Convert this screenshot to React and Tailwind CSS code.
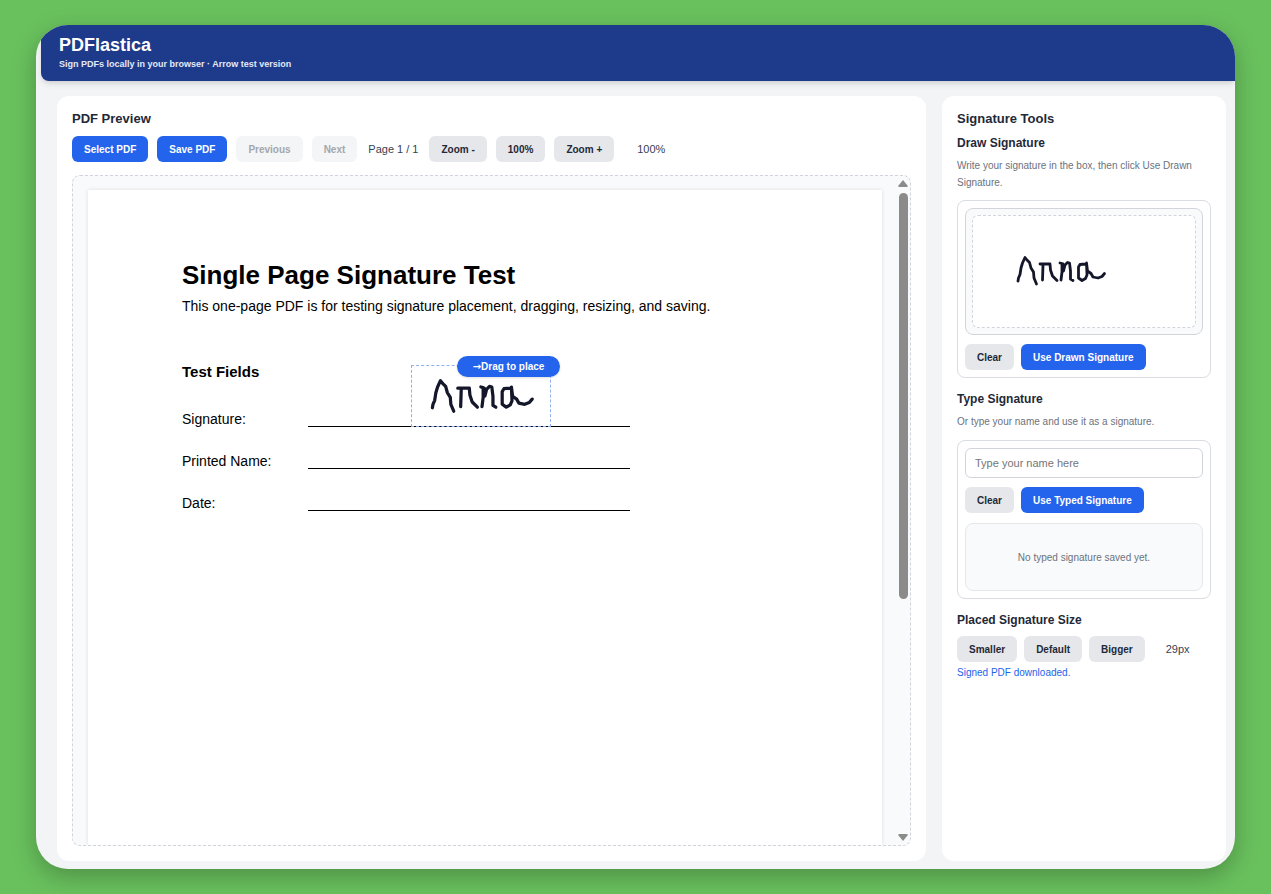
import React, { useState } from "react";

const variants = {
  primary: "bg-[#2463eb] text-white",
  secondary: "bg-[#e5e7eb] text-[#1f2937]",
  disabled: "bg-[#f4f5f6] text-[#a3a7ad]",
};

const Button = ({ variant = "secondary", children, ...props }) => (
  <button
    type="button"
    disabled={variant === "disabled"}
    className={`h-[26px] shrink-0 whitespace-nowrap rounded-md px-3 text-[10px] font-bold ${variants[variant]}`}
    {...props}
  >
    {children}
  </button>
);

const SignatureInk = ({ className }) => (
  <svg
    viewBox="0 0 104 42"
    className={className}
    fill="none"
    stroke="#14162a"
    strokeWidth="2.8"
    strokeLinecap="round"
    strokeLinejoin="round"
    role="img"
    aria-label="Drawn signature"
  >
    <path d="M9 31 L9.500 28 L11 24.500 L12 18 L13.500 13 L16 7.500 L18 10 L20.500 12.500 L22 18 L24.500 22 L25 28 L27.500 34" />
    <path d="M31 14 L41 14 M34 15 L33.500 30 M41 14 L41.500 20 L43.500 26 L48 30.500" />
    <path d="M51 13 L53 13.500 L53 22 L52 30 M54 14 L54.500 21 L56 15 L58.500 12.500 L60.500 13 L61.500 21 L61.500 29 L64 30.500" />
    <path d="M76.500 14 L71 14.500 L69.500 17 L69.500 28 L73 30.500 L76.500 28.500 L78 25 L77.500 13 L78.500 21 L82 23.500 L84 27 L89 28 L93 26.500 L95.500 23.500" />
  </svg>
);

const FieldRow = ({ label, children }) => (
  <div className="flex h-[42px] items-end">
    <span className="w-[126px] shrink-0 text-sm leading-4">{label}</span>
    <div className="relative h-6 w-[322px] border-b border-black">{children}</div>
  </div>
);

const ScrollBar = () => (
  <div className="flex w-2.5 shrink-0 flex-col items-center py-1" aria-hidden="true">
    <svg width="10" height="7" viewBox="0 0 10 7" fill="#8b8b8b">
      <path d="M5 0 L9.500 5.500 Q10 7 9 7 L1 7 Q0 7 0.500 5.500 Z" />
    </svg>
    <div className="flex w-full grow flex-col items-center py-1.5">
      <div className="h-[64%] w-[9px] rounded-full bg-[#8b8b8b]" />
    </div>
    <svg width="10" height="7" viewBox="0 0 10 7" fill="#8b8b8b">
      <path d="M5 7 L9.500 1.500 Q10 0 9 0 L1 0 Q0 0 0.500 1.500 Z" />
    </svg>
  </div>
);

const PdfPage = () => (
  <div className="grow bg-white px-[94px] pt-[68px] text-black shadow-[0_0_4px_rgba(0,0,0,0.12)]">
    <h1 className="text-[26px] leading-[34px] font-bold">Single Page Signature Test</h1>
    <p className="text-sm leading-7">
      This one-page PDF is for testing signature placement, dragging, resizing, and saving.
    </p>
    <h2 className="mt-10 mb-px text-[15px] leading-6 font-bold">Test Fields</h2>
    <FieldRow label="Signature:">
      <div className="absolute -bottom-px left-[103px] h-[62px] w-[140px] border border-dashed border-[#8fb0ee]">
        <SignatureInk className="absolute top-1.5 left-2.5 w-[120px]" />
        <span className="absolute -top-2.5 left-[45px] flex h-[21px] w-[103px] items-center justify-center rounded-full bg-[#2463eb] text-[10px] font-bold whitespace-nowrap text-white shadow">
          <span className="font-['DejaVu_Sans',sans-serif]">→</span>Drag to place
        </span>
      </div>
    </FieldRow>
    <FieldRow label="Printed Name:" />
    <FieldRow label="Date:" />
  </div>
);

const PreviewPanel = () => {
  const [zoom, setZoom] = useState(100);

  return (
    <section className="flex min-w-0 grow flex-col rounded-xl bg-white p-[15px]">
      <h2 className="text-[13px] leading-4 font-bold">PDF Preview</h2>
      <div className="mt-[9px] flex items-center gap-[9px]">
        <Button variant="primary">Select PDF</Button>
        <Button variant="primary">Save PDF</Button>
        <Button variant="disabled">Previous</Button>
        <Button variant="disabled">Next</Button>
        <span className="px-0.5 text-[11px] whitespace-nowrap text-[#374151]">Page 1 / 1</span>
        <Button onClick={() => setZoom(zoom - 10)}>Zoom -</Button>
        <Button onClick={() => setZoom(100)}>100%</Button>
        <Button onClick={() => setZoom(zoom + 10)}>Zoom +</Button>
        <span className="ml-3.5 text-[11px] text-[#374151]">{zoom}%</span>
      </div>
      <div className="mt-[13px] flex min-h-0 grow overflow-hidden rounded-lg border border-dashed border-[#d1d5db] bg-[#f9fafb] pr-0.5">
        <div className="flex min-w-0 grow pt-3.5 pr-4 pl-[15px]">
          <PdfPage />
        </div>
        <ScrollBar />
      </div>
    </section>
  );
};

const ToolsPanel = () => {
  const [name, setName] = useState("");

  return (
    <aside className="w-[284px] shrink-0 rounded-xl bg-white p-[15px]">
      <h2 className="text-[13px] leading-4 font-bold">Signature Tools</h2>

      <h3 className="mt-[7px] text-xs leading-[18px] font-bold">Draw Signature</h3>
      <p className="mt-[5px] text-[10px] leading-[17px] text-[#6b7280]">
        Write your signature in the box, then click Use Drawn Signature.
      </p>
      <div className="mt-[9px] rounded-lg border border-[#d9dce1] p-[7px]">
        <div className="h-[127px] rounded-lg border border-[#d1d5db] bg-[#f9fafb] p-1.5">
          <div className="h-full rounded-md border border-dashed border-[#d1d5db] bg-white pt-[34px] pl-9">
            <SignatureInk className="w-[104px]" />
          </div>
        </div>
        <div className="mt-[9px] flex gap-[7px]">
          <Button>Clear</Button>
          <Button variant="primary">Use Drawn Signature</Button>
        </div>
      </div>

      <h3 className="mt-3 text-xs leading-[18px] font-bold">Type Signature</h3>
      <p className="mt-[5px] text-[10px] leading-[17px] text-[#6b7280]">
        Or type your name and use it as a signature.
      </p>
      <div className="mt-2.5 rounded-lg border border-[#d9dce1] p-[7px]">
        <input
          type="text"
          aria-label="Type your name"
          value={name}
          onChange={(e) => setName(e.target.value)}
          placeholder="Type your name here"
          className="block h-[30px] w-full rounded-md border border-[#d1d5db] bg-white px-[9px] text-[11px] placeholder:text-[#757575]"
        />
        <div className="mt-[9px] flex gap-[7px]">
          <Button onClick={() => setName("")}>Clear</Button>
          <Button variant="primary">Use Typed Signature</Button>
        </div>
        <div className="mt-2.5 flex h-[68px] items-center justify-center rounded-lg border border-[#e5e7eb] bg-[#f9fafb] text-[10px] text-[#6b7280]">
          No typed signature saved yet.
        </div>
      </div>

      <h3 className="mt-3 text-xs leading-[18px] font-bold">Placed Signature Size</h3>
      <div className="mt-[7px] flex items-center gap-[7px]">
        <Button>Smaller</Button>
        <Button>Default</Button>
        <Button>Bigger</Button>
        <span className="ml-3.5 text-[11px] text-[#374151]">29px</span>
      </div>
      <p className="mt-[3px] text-[10px] leading-4 text-[#2463eb]">Signed PDF downloaded.</p>
    </aside>
  );
};

export default function App() {
  return (
    <div className="flex h-screen bg-[#69c15d] px-9 py-[25px] font-['Liberation_Sans',Arial,sans-serif] text-[#1f2937]">
      <div className="flex min-w-0 grow flex-col overflow-hidden rounded-[32px] bg-[#f3f4f6] pl-[5px] shadow-[0_8px_24px_rgba(0,0,0,0.25)]">
        <header className="h-14 shrink-0 rounded-bl-lg bg-[#1e3a8a] pt-2 pl-[18px] text-white shadow-md">
          <h1 className="text-lg leading-6 font-bold">PDFlastica</h1>
          <p className="text-[9px] leading-[14px] font-bold text-[#e3e9f8]">
            Sign PDFs locally in your browser · Arrow test version
          </p>
        </header>
        <main className="flex min-h-0 grow gap-4 pt-[15px] pr-[9px] pb-2 pl-4">
          <PreviewPanel />
          <ToolsPanel />
        </main>
      </div>
    </div>
  );
}
